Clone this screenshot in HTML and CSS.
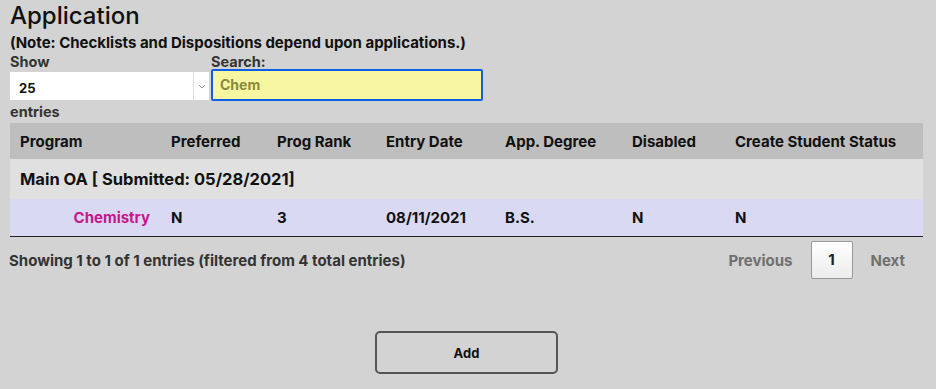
FILE: index.html
```html
<!DOCTYPE html>
<html>
<head>
<meta charset="utf-8">
<link rel="stylesheet" href="styles.css">
</head>
<body>
<div class="page">
  <h1 class="title">Application</h1>
  <div class="note">(Note: Checklists and Dispositions depend upon applications.)</div>
  <div class="controls">
    <div class="show">
      <div class="label">Show</div>
      <div class="select">
        <span class="select-val">25</span>
        <span class="select-arrow"><svg width="8" height="5" viewBox="0 0 8 5"><path d="M1 1 L4 4 L7 1" fill="none" stroke="#9a9a9a" stroke-width="1"/></svg></span>
      </div>
      <div class="label entries">entries</div>
    </div>
    <div class="search">
      <div class="label">Search:</div>
      <div class="search-input">Chem</div>
    </div>
  </div>
  <table class="grid">
    <colgroup>
      <col class="c1"><col class="c2"><col class="c3"><col class="c4"><col class="c5"><col class="c6"><col class="c7">
    </colgroup>
    <thead>
      <tr><th>Program</th><th>Preferred</th><th>Prog Rank</th><th>Entry Date</th><th>App. Degree</th><th>Disabled</th><th>Create Student Status</th></tr>
    </thead>
    <tbody>
      <tr class="group"><td colspan="7">Main OA [ Submitted: 05/28/2021]</td></tr>
      <tr class="data"><td class="prog">Chemistry</td><td>N</td><td>3</td><td>08/11/2021</td><td>B.S.</td><td>N</td><td>N</td></tr>
    </tbody>
  </table>
  <div class="footer">
    <div class="info">Showing 1 to 1 of 1 entries (filtered from 4 total entries)</div>
    <div class="pager">
      <span class="pg">Previous</span>
      <span class="pg current">1</span>
      <span class="pg">Next</span>
    </div>
  </div>
  <div class="actions">
    <button class="add">Add</button>
  </div>
</div>
</body>
</html>
```
FILE: styles.css
```css
html, body {
  margin: 0;
  padding: 0;
  background: #d3d3d3;
}
body {
  font-family: Inter, Lato, "Noto Sans", sans-serif;
  color: #111;
}
.page {
  padding: 0 13px 0 10px;
}
.title {
  margin: 0;
  font-size: 24px;
  font-weight: 500;
  line-height: 31px;
  color: #111;
}
.note {
  font-size: 15px;
  font-weight: 700;
  line-height: 20px;
  margin-top: 2px;
}
.controls {
  display: flex;
  gap: 2px;
}
.label {
  font-size: 14.5px;
  font-weight: 700;
  color: #333;
  line-height: 18px;
}
.show {
  width: 199px;
}
.select {
  margin-top: 1px;
  height: 28px;
  background: #fff;
  display: flex;
  align-items: center;
}
.select-val {
  flex: 1;
  padding-left: 9px;
  font-size: 13px;
  font-weight: 700;
  color: #111;
  padding-top: 3px;
}
.select-arrow {
  width: 15px;
  height: 28px;
  border-left: 1px solid #ddd;
  display: flex;
  align-items: center;
  justify-content: center;
}
.entries {
  margin-top: 3px;
}
.search {
  width: 272px;
}
.search-input {
  margin-top: -2px;
  height: 28px;
  box-sizing: content-box;
  background: #f7f7a1;
  border: 2px solid #0e5fe3;
  border-radius: 2px;
  font-size: 14px;
  font-weight: 700;
  color: #8a8a3c;
  line-height: 28px;
  padding-left: 7px;
}
.grid {
  margin-top: 2px;
  width: 913px;
  border-collapse: collapse;
  table-layout: fixed;
  font-size: 15px;
  font-weight: 700;
}
.c1 { width: 151px; }
.c2 { width: 106px; }
.c3 { width: 109px; }
.c4 { width: 119px; }
.c5 { width: 127px; }
.c6 { width: 103px; }
.c7 { width: 198px; }
.grid th {
  background: #bebebe;
  text-align: left;
  height: 36px;
  padding: 0 10px;
  color: #111;
}
.grid td {
  padding: 0 10px;
}
.group td {
  background: #e0e0e0;
  height: 40px;
  font-size: 16.5px;
}
.data td {
  background: #dad9f3;
  height: 37px;
  border-bottom: 1px solid #222;
}
.data td.prog {
  text-align: right;
  color: #c5168a;
  padding-right: 11px;
}
.footer {
  display: flex;
  justify-content: space-between;
  align-items: center;
  padding-top: 4px;
  padding-right: 0;
}
.info {
  font-size: 15px;
  font-weight: 700;
  color: #333;
  margin-left: -1px;
}
.pager {
  display: flex;
  align-items: center;
}
.pg {
  font-size: 15px;
  font-weight: 700;
  color: #707070;
  padding: 0 18px;
}
.pg.current {
  box-sizing: border-box;
  width: 42px;
  height: 38px;
  line-height: 36px;
  padding: 0;
  text-align: center;
  color: #222;
  background: linear-gradient(#fff, #ececec);
  border: 1px solid #999;
  border-radius: 2px;
}
.actions {
  display: flex;
  justify-content: center;
  padding-top: 52px;
}
.add {
  width: 183px;
  height: 43px;
  background: transparent;
  border: 2px solid #555;
  border-radius: 5px;
  font-family: Inter, Lato, "Noto Sans", sans-serif;
  font-size: 13px;
  font-weight: 700;
  color: #111;
}
```
